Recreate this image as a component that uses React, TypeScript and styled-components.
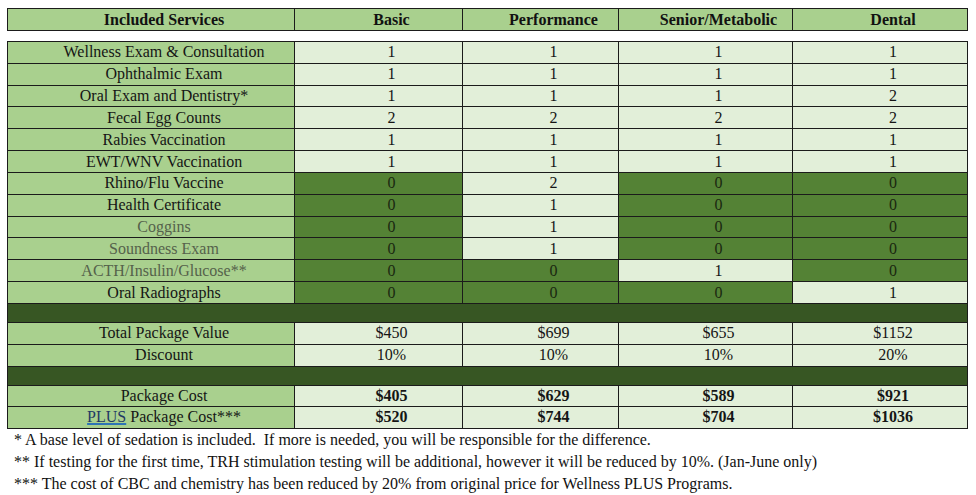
import React from "react";
import styled, { createGlobalStyle } from "styled-components";

const SERIF = `"Liberation Serif", "Times New Roman", serif`;

const Global = createGlobalStyle`
  html, body { margin: 0; padding: 0; background: #ffffff; }
  body { font-family: ${SERIF}; color: #111; }
  * { box-sizing: border-box; }
`;

const Page = styled.div`
  padding: 8px 0 0 7px;
  width: 976px;
  font-family: ${SERIF};
`;

const Grid = styled.div`
  display: grid;
  grid-template-columns: 287px 168px 156px 174px 175px;
  width: 961px;
  border-top: 1px solid #1b1b1b;
  border-left: 1px solid #1b1b1b;
`;

const HeaderGrid = styled(Grid)`
  margin-bottom: 10px;
`;

type Tone = "label" | "light" | "dark";

const toneBg: Record<Tone, string> = {
  label: "#a9d08e",
  light: "#e2efd9",
  dark: "#548235",
};

const HeadCell = styled.div`
  height: 22px;
  padding-left: 26px;
  border-right: 1px solid #1b1b1b;
  border-bottom: 1px solid #1b1b1b;
  background: #a9d08e;
  color: #111;
  font-family: ${SERIF};
  font-weight: 700;
  font-size: 16px;
  display: flex;
  align-items: center;
  justify-content: center;
  white-space: nowrap;
`;

const Cell = styled.div<{ $tone: Tone; $muted?: boolean; $bold?: boolean; $h?: number }>`
  height: ${(p) => p.$h ?? 21.83}px;
  padding-left: 26px;
  border-right: 1px solid #1b1b1b;
  border-bottom: 1px solid #1b1b1b;
  background: ${(p) => toneBg[p.$tone]};
  color: ${(p) => (p.$muted ? "#55624b" : p.$tone === "dark" ? "#1a2810" : "#151515")};
  font-family: ${SERIF};
  font-size: 16px;
  font-weight: ${(p) => (p.$bold ? 700 : 400)};
  display: flex;
  align-items: center;
  justify-content: center;
  white-space: nowrap;
`;

const Band = styled.div`
  grid-column: 1 / -1;
  height: 19px;
  border-right: 1px solid #1b1b1b;
  border-bottom: 1px solid #1b1b1b;
  background: #375623;
`;

const Plus = styled.span`
  color: #1f3864;
  text-decoration: underline;
  text-decoration-color: #2e74b5;
  text-decoration-thickness: 1.5px;
  margin-right: 4px;
`;

const Notes = styled.div`
  padding: 0 0 0 7px;
  font-family: ${SERIF};
  font-size: 16px;
  line-height: 22px;
  color: #111;
`;

const Note = styled.div`
  white-space: pre;
`;

type Row = { label: string; muted?: boolean; vals: [string, boolean][] };

const L = true;
const D = false;

const services: Row[] = [
  { label: "Wellness Exam & Consultation", vals: [["1", L], ["1", L], ["1", L], ["1", L]] },
  { label: "Ophthalmic Exam", vals: [["1", L], ["1", L], ["1", L], ["1", L]] },
  { label: "Oral Exam and Dentistry*", vals: [["1", L], ["1", L], ["1", L], ["2", L]] },
  { label: "Fecal Egg Counts", vals: [["2", L], ["2", L], ["2", L], ["2", L]] },
  { label: "Rabies Vaccination", vals: [["1", L], ["1", L], ["1", L], ["1", L]] },
  { label: "EWT/WNV Vaccination", vals: [["1", L], ["1", L], ["1", L], ["1", L]] },
  { label: "Rhino/Flu Vaccine", vals: [["0", D], ["2", L], ["0", D], ["0", D]] },
  { label: "Health Certificate", vals: [["0", D], ["1", L], ["0", D], ["0", D]] },
  { label: "Coggins", muted: true, vals: [["0", D], ["1", L], ["0", D], ["0", D]] },
  { label: "Soundness Exam", muted: true, vals: [["0", D], ["1", L], ["0", D], ["0", D]] },
  { label: "ACTH/Insulin/Glucose**", muted: true, vals: [["0", D], ["0", D], ["1", L], ["0", D]] },
  { label: "Oral Radiographs", vals: [["0", D], ["0", D], ["0", D], ["1", L]] },
];

const PriceRow = ({
  label,
  vals,
  bold,
  h,
}: {
  label: React.ReactNode;
  vals: string[];
  bold?: boolean;
  h?: number;
}) => (
  <>
    <Cell $tone="label" $h={h}>{label}</Cell>
    {vals.map((v, i) => (
      <Cell key={i} $tone="light" $bold={bold} $h={h}>{v}</Cell>
    ))}
  </>
);

export default function App() {
  return (
    <>
      <Global />
      <Page>
        <HeaderGrid>
          <HeadCell>Included Services</HeadCell>
          <HeadCell>Basic</HeadCell>
          <HeadCell>Performance</HeadCell>
          <HeadCell>Senior/Metabolic</HeadCell>
          <HeadCell>Dental</HeadCell>
        </HeaderGrid>
        <Grid>
          {services.map((r) => (
            <React.Fragment key={r.label}>
              <Cell $tone="label" $muted={r.muted}>{r.label}</Cell>
              {r.vals.map(([v, light], i) => (
                <Cell key={i} $tone={light ? "light" : "dark"}>{v}</Cell>
              ))}
            </React.Fragment>
          ))}
          <Band />
          <PriceRow label="Total Package Value" vals={["$450", "$699", "$655", "$1152"]} h={22} />
          <PriceRow label="Discount" vals={["10%", "10%", "10%", "20%"]} h={22} />
          <Band />
          <PriceRow label="Package Cost" vals={["$405", "$629", "$589", "$921"]} bold h={21} />
          <PriceRow
            label={<span><Plus>PLUS</Plus>Package Cost***</span>}
            vals={["$520", "$744", "$704", "$1036"]}
            bold
            h={22}
          />
        </Grid>
        <Notes>
          <Note>* A base level of sedation is included.  If more is needed, you will be responsible for the difference.</Note>
          <Note>** If testing for the first time, TRH stimulation testing will be additional, however it will be reduced by 10%. (Jan-June only)</Note>
          <Note>*** The cost of CBC and chemistry has been reduced by 20% from original price for Wellness PLUS Programs.</Note>
        </Notes>
      </Page>
    </>
  );
}
